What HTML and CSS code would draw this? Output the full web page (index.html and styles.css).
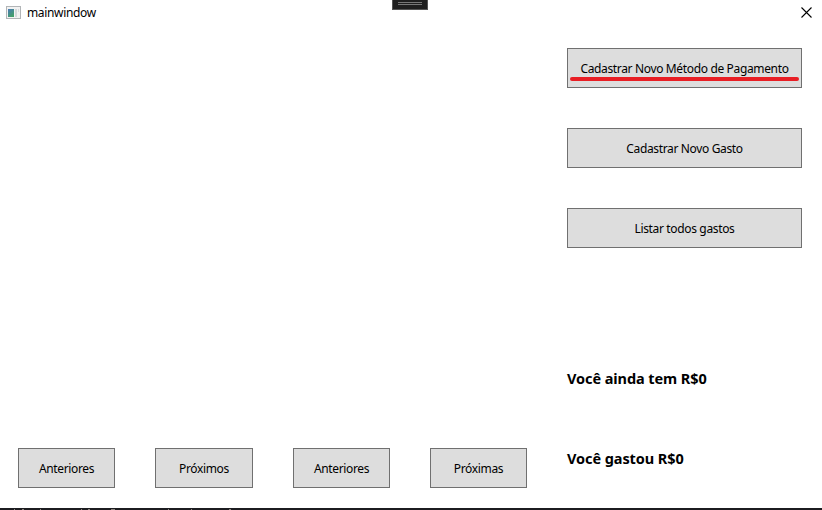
FILE: index.html
```html
<!DOCTYPE html>
<html lang="pt-BR">
<head>
<meta charset="utf-8">
<title>mainwindow</title>
<link rel="stylesheet" href="styles.css">
</head>
<body>
<div class="window">
  <header class="titlebar">
    <svg class="app-icon" width="15" height="13" viewBox="0 0 15 13">
      <defs><linearGradient id="pane" x1="0" y1="0" x2="0.6" y2="1"><stop offset="0" stop-color="#4a79b8"/><stop offset="1" stop-color="#43a069"/></linearGradient></defs>
      <rect x=".5" y=".5" width="14" height="12" fill="#f2f2f2" stroke="#b2b5b7"/>
      <rect x="2" y="3" width="6" height="8" fill="url(#pane)"/>
      <rect x="9" y="3" width="2" height="8" fill="#d3d8da"/>
      <rect x="12" y="3" width="1" height="3" fill="#d8dcdf"/>
    </svg>
    <span class="title">mainwindow</span>
    <svg class="close" width="11" height="11" viewBox="0 0 11 11"><path d="M.5 .5L10.5 10.5M10.5 .5L.5 10.5" stroke="#000" stroke-width="1.1"/></svg>
  </header>
  <div class="debug-handle"><i></i><i></i></div>
  <main class="content">
    <section class="lists">
      <button class="btn"><span>Anteriores</span></button>
      <button class="btn wide"><span>Próximos</span></button>
      <button class="btn"><span>Anteriores</span></button>
      <button class="btn"><span>Próximas</span></button>
    </section>
    <aside class="side">
      <button class="btn marked"><span>Cadastrar Novo Método de Pagamento</span></button>
      <button class="btn"><span>Cadastrar Novo Gasto</span></button>
      <button class="btn"><span>Listar todos gastos</span></button>
      <p class="total first">Você ainda tem R$0</p>
      <p class="total">Você gastou R$0</p>
    </aside>
  </main>
  <footer class="edge">
    <svg width="240" height="2" viewBox="0 0 240 2"><path d="M14 1.5h1M22 1.5h2M40 1.5h1M81 1.5h1M88 1.5h2M111 1.5h4M168 1.5h1M191 1.5h1M229 1.5h2" stroke="#8d8580"/></svg>
  </footer>
</div>
</body>
</html>
```
FILE: styles.css
```css
* { box-sizing: border-box; }
body { margin: 0; overflow: hidden; background: #fff; color: #000; font-family: "Noto Sans", sans-serif; font-size: 12px; }
.window { position: relative; width: 822px; height: 510px; display: flex; flex-direction: column; }
.titlebar { flex: none; height: 26px; display: flex; align-items: center; padding: 0 10px 2px 6px; }
.app-icon { flex: none; }
.title { margin-left: 6px; line-height: 16px; letter-spacing: -0.35px; padding-top: 2px; }
.close { margin-left: auto; }
.debug-handle { position: absolute; left: 392px; top: 0; width: 36px; height: 10px; background: #1f1f1f; border: 1px solid #555; border-top: 0; padding: 2px 5px; display: flex; flex-direction: column; gap: 1px; }
.debug-handle i { height: 1px; background: #777; }
.content { flex: 1; min-height: 0; display: flex; justify-content: space-between; padding: 22px 20px 20px 18px; }
.lists { display: flex; align-items: flex-end; gap: 40px; }
.lists .btn { width: 97px; }
.lists .wide { width: 98px; }
.side { width: 235px; display: flex; flex-direction: column; }
.btn { display: flex; align-items: center; justify-content: center; height: 40px; padding: 2px 0 0; border: 1px solid #707070; border-radius: 0; background: #ddd; color: #000; font: 12px/16px "Noto Sans", sans-serif; letter-spacing: -0.35px; white-space: nowrap; }
.side .btn { flex: none; margin-bottom: 40px; }
.marked { position: relative; }
.marked::after { content: ""; position: absolute; left: 2px; right: 2px; top: 28px; height: 4px; border-radius: 2px; background: #e81e24; }
.total { margin: 0; font-size: 14.5px; line-height: 20px; font-weight: 700; letter-spacing: -0.08px; }
.first { margin: 80px 0 60px; }
.edge { flex: none; height: 2px; background: #1c1c20; }
.edge svg { display: block; }
```
